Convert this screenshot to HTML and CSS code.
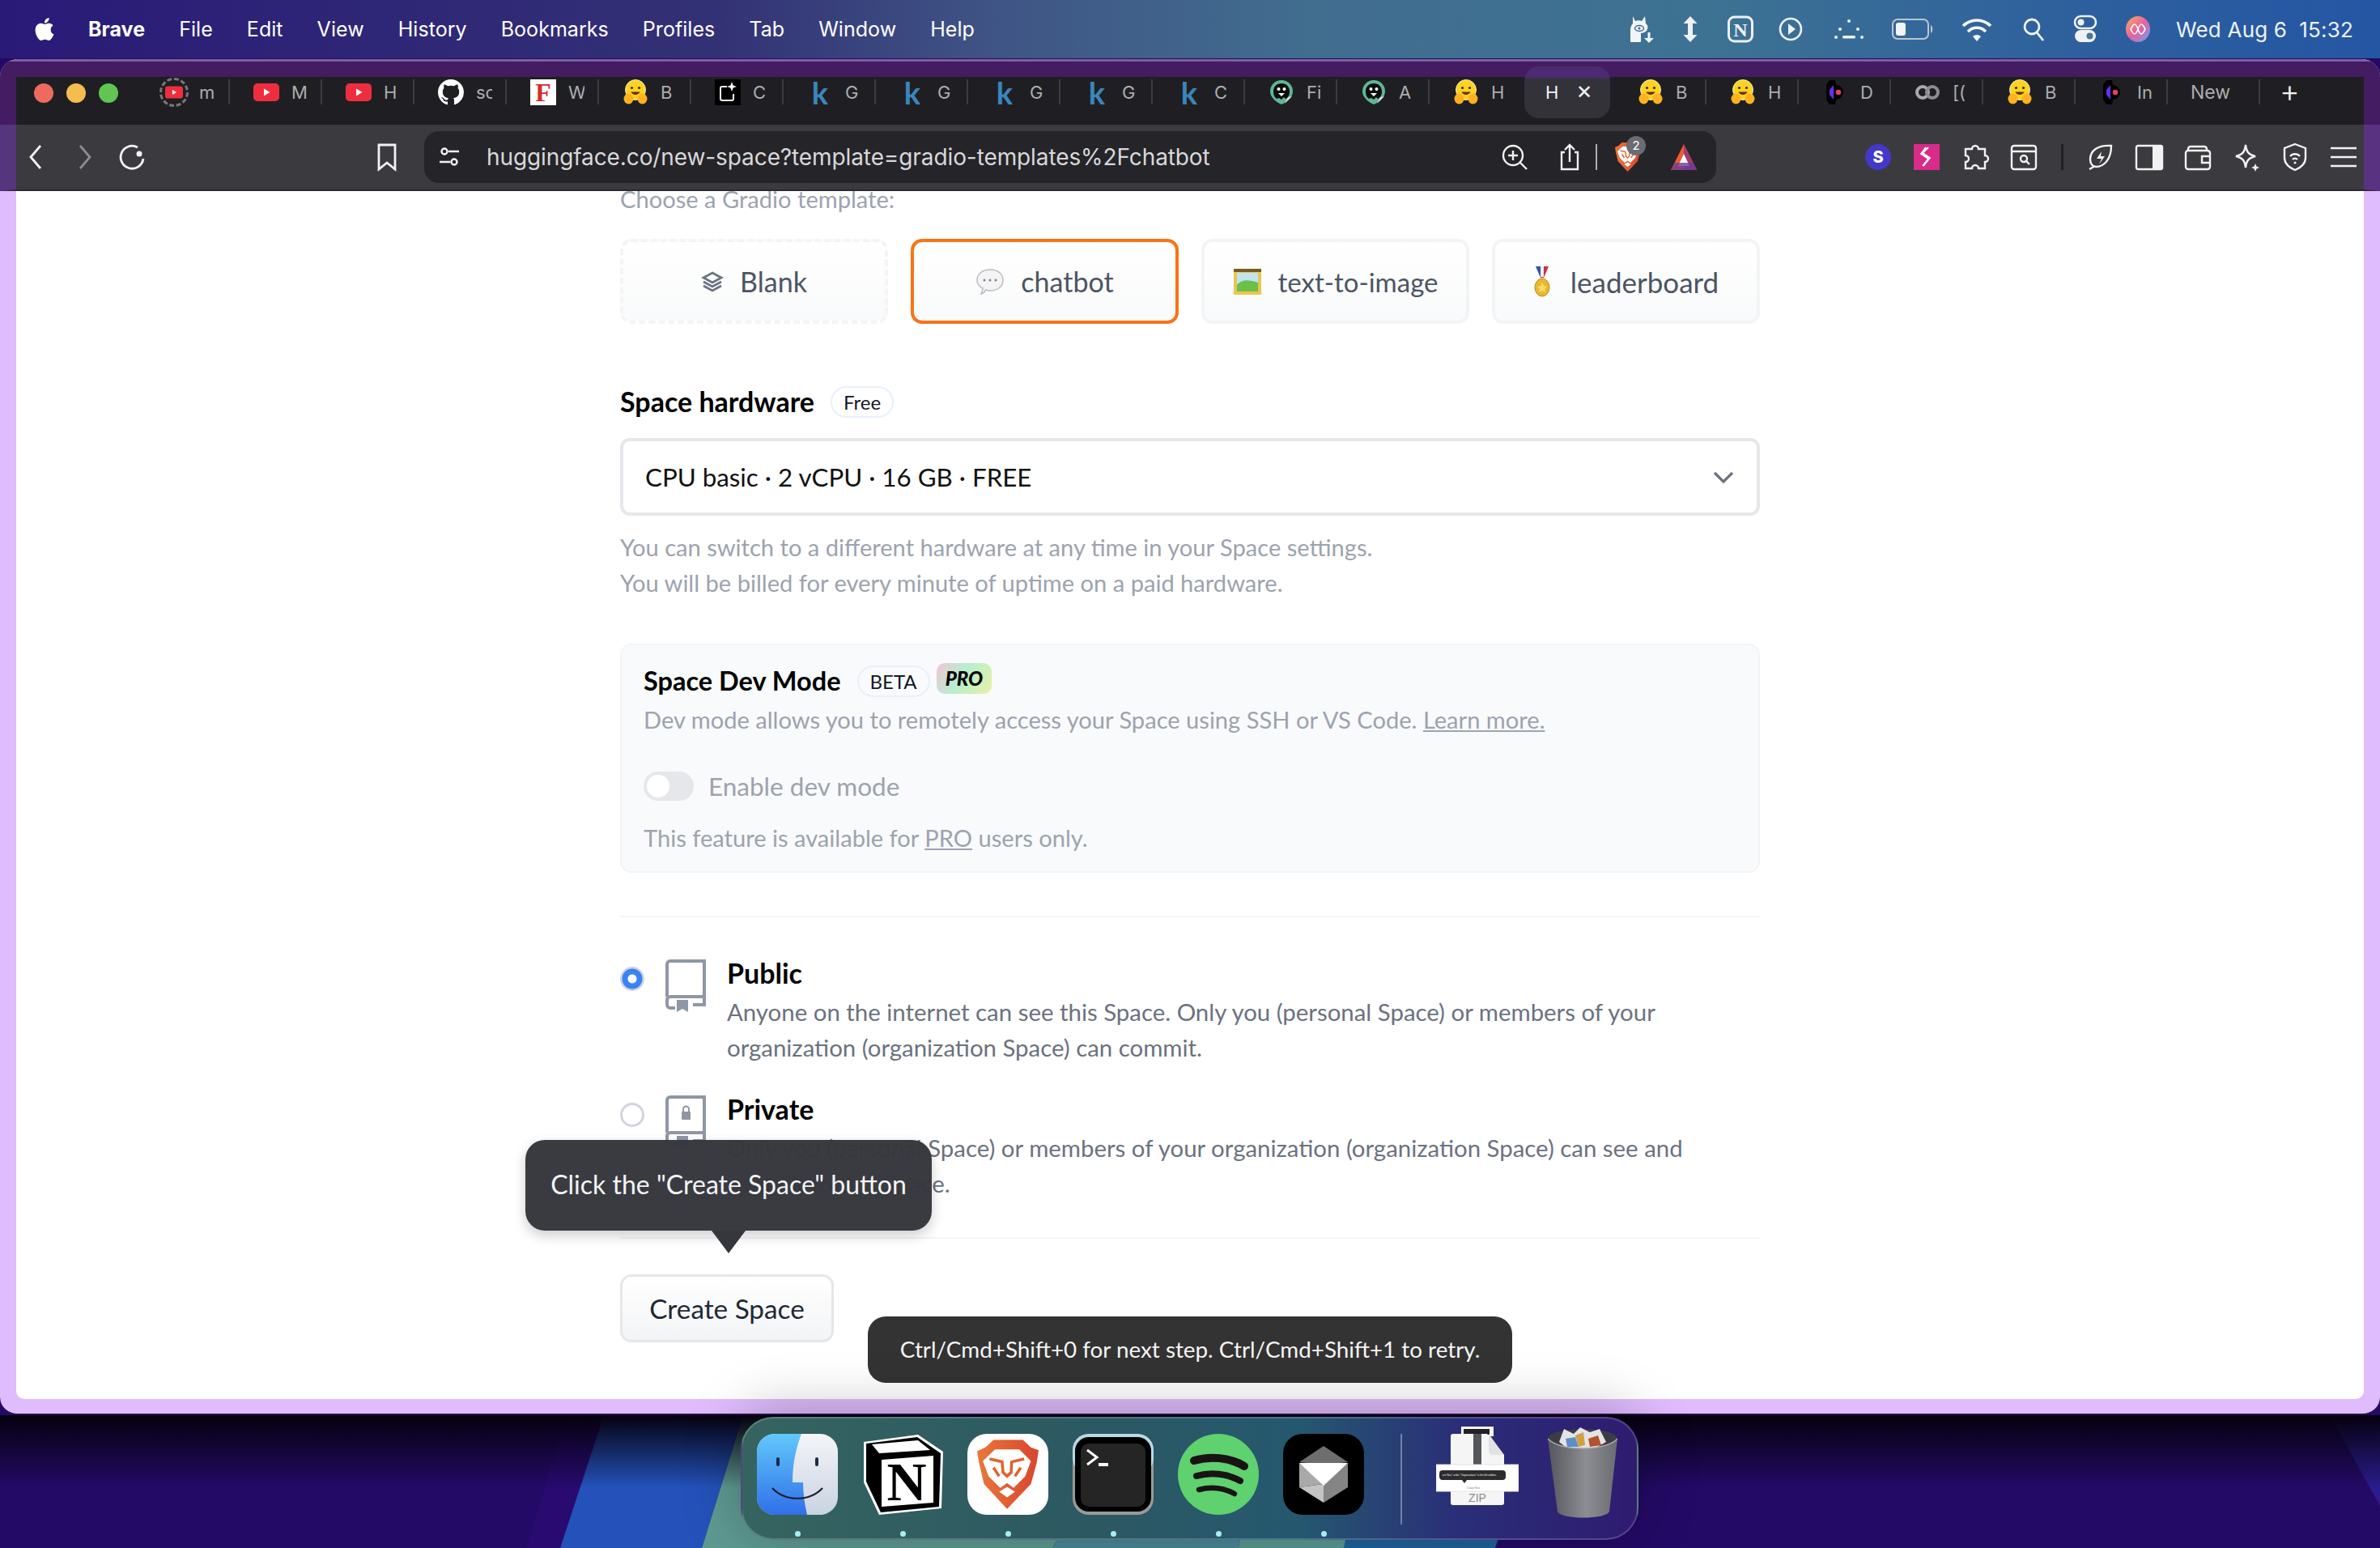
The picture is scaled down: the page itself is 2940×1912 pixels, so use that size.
FILE: index.html
```html
<!DOCTYPE html>
<html>
<head>
	<meta charset="UTF-8">
	<title>Create a new Space</title>
	<link rel="stylesheet" href="styles.css">
</head>
<body>

<svg class="defs" width="0" height="0">
	<defs>
		<linearGradient id="finderL" x1="0" y1="0" x2="0" y2="1"><stop offset="0" stop-color="#62c8fb"/><stop offset="1" stop-color="#2f6fe8"/></linearGradient>
		<linearGradient id="finderR" x1="0" y1="0" x2="0" y2="1"><stop offset="0" stop-color="#f4f5f7"/><stop offset="1" stop-color="#c9d3e2"/></linearGradient>
		<linearGradient id="braveG" x1="0" y1="0" x2="1" y2="0"><stop offset="0" stop-color="#e8783a"/><stop offset="1" stop-color="#d9452f"/></linearGradient>
		<linearGradient id="binG" x1="0" y1="0" x2="1" y2="0"><stop offset="0" stop-color="#55565c"/><stop offset=".55" stop-color="#8d8e93"/><stop offset="1" stop-color="#6a6b71"/></linearGradient>
		<linearGradient id="siriG" x1="0" y1="0" x2="1" y2="1"><stop offset="0" stop-color="#f5b25c"/><stop offset=".5" stop-color="#e8619c"/><stop offset="1" stop-color="#63a4f5"/></linearGradient>

		<symbol id="apple" viewBox="0 0 24 24"><path fill="#fff" d="M12.152 6.896c-.948 0-2.415-1.078-3.96-1.04-2.04.027-3.91 1.183-4.961 3.014-2.117 3.675-.546 9.103 1.519 12.09 1.013 1.454 2.208 3.09 3.792 3.039 1.52-.065 2.09-.987 3.935-.987 1.831 0 2.35.987 3.96.948 1.637-.026 2.676-1.48 3.676-2.948 1.156-1.688 1.636-3.325 1.662-3.415-.039-.013-3.182-1.221-3.22-4.857-.026-3.04 2.48-4.494 2.597-4.559-1.429-2.09-3.623-2.324-4.39-2.376-2-.156-3.675 1.09-4.61 1.09zM15.53 3.83c.843-1.012 1.4-2.427 1.245-3.83-1.207.052-2.662.805-3.532 1.818-.78.896-1.454 2.338-1.273 3.714 1.338.104 2.715-.688 3.559-1.701"/></symbol>

		<symbol id="hf" viewBox="0 0 32 32">
			<ellipse cx="16" cy="13" rx="12.5" ry="12.5" fill="#ffd21e" stroke="#fff" stroke-width=".8"/>
			<circle cx="11.5" cy="10.5" r="1.6" fill="#32343d"/><circle cx="20.5" cy="10.5" r="1.6" fill="#32343d"/>
			<path d="M10.5 15.5c1.5 4.5 9.5 4.5 11 0z" fill="#6b2d1e"/>
			<ellipse cx="7.5" cy="24" rx="6" ry="6.5" fill="#ffb21e"/><ellipse cx="24.5" cy="24" rx="6" ry="6.5" fill="#ffb21e"/>
		</symbol>
		<symbol id="yt" viewBox="0 0 32 32"><rect x="0" y="5" width="32" height="22" rx="5" fill="#ee2e3f"/><path d="M13 11.5l7.5 4.5-7.5 4.5z" fill="#fff"/></symbol>
		<symbol id="gh" viewBox="0 0 16 16"><path fill="#fff" d="M8 0C3.58 0 0 3.58 0 8c0 3.54 2.29 6.53 5.47 7.59.4.07.55-.17.55-.38 0-.19-.01-.82-.01-1.49-2.01.37-2.53-.49-2.69-.94-.09-.23-.48-.94-.82-1.13-.28-.15-.68-.52-.01-.53.63-.01 1.08.58 1.23.82.72 1.21 1.87.87 2.33.66.07-.52.28-.87.51-1.07-1.78-.2-3.64-.89-3.64-3.95 0-.87.31-1.59.82-2.15-.08-.2-.36-1.02.08-2.12 0 0 .67-.21 2.2.82.64-.18 1.32-.27 2-.27.68 0 1.36.09 2 .27 1.53-1.04 2.2-.82 2.2-.82.44 1.1.16 1.92.08 2.12.51.56.82 1.27.82 2.15 0 3.07-1.87 3.75-3.65 3.95.29.25.54.73.54 1.48 0 1.07-.01 1.93-.01 2.2 0 .21.15.46.55.38A8.013 8.013 0 0016 8c0-4.42-3.58-8-8-8z"/></symbol>
		<symbol id="spark" viewBox="0 0 32 32"><rect width="32" height="32" fill="#000"/><path d="M15 9H9a2 2 0 0 0-2 2v13a2 2 0 0 0 2 2h12a2 2 0 0 0 2-2v-6" fill="none" stroke="#eee" stroke-width="2"/><path d="M21 3l1.6 4.4L27 9l-4.4 1.6L21 15l-1.6-4.4L15 9l4.4-1.6z" fill="#fff"/></symbol>
		<symbol id="pin" viewBox="0 0 32 32"><path d="M16 1a14 14 0 0 1 14 14c0 7-7 13-14 16C9 28 2 22 2 15A14 14 0 0 1 16 1z" fill="#5db795"/><path d="M16 5c6 0 10 4 10 10 0 5-2 8-5 9l-2-2-3 3-3-2-3 1c-3-2-4-5-4-9C6 9 10 5 16 5z" fill="#0d0d0d"/><circle cx="12.500" cy="12" r="2" fill="#fff"/><circle cx="19.500" cy="12" r="2" fill="#fff"/><path d="M12 17h8l-4 4z" fill="#fff"/><path d="M20 30l9-9-5 1z" fill="#ddd"/></symbol>
		<symbol id="purple" viewBox="0 0 32 32"><path d="M9 1h7l1 6a9 9 0 0 1 0 18l-1 6H9L5 25V7z" fill="#000"/><path d="M14 7L9 13v6l5 6z" fill="#6a2cf5"/><circle cx="20" cy="16" r="3.2" fill="#ee3e62"/></symbol>
		<symbol id="colab" viewBox="0 0 32 32"><circle cx="10" cy="16" r="7" fill="none" stroke="#a9a9ab" stroke-width="4"/><circle cx="22" cy="16" r="7" fill="none" stroke="#8c8c8e" stroke-width="4"/></symbol>
		<symbol id="lion" viewBox="0 0 32 36">
			<path d="M8.600 0h15.100L28 4l4 1.500L31 12l-3 11-12.400 13L3.600 23 1 12 0 6l4.300-2z" fill="url(#braveG)"/>
			<path d="M9.300 5h12.700L28 11l-3 8-6 6-3.400-2.500L12 25l-6-6-3-8z" fill="#fff"/>
			<path d="M6.500 10l6.500 1.500.5 5.500 2.100 2 2.100-2 .3-5.500 6.500-1.500M8.500 14.500l3 4.500M22.700 14.500l-3 4.500" fill="none" stroke="#e2622f" stroke-width="1.500"/>
			<path d="M11.500 27l4.100-2.500 4.100 2.500-4.100 3z" fill="#fff"/>
		</symbol>

		<symbol id="bookIcon" viewBox="0 0 50 66"><path d="M2 46V6a4 4 0 0 1 4-4h42v44H6a4 4 0 0 0-4 4v6a4 4 0 0 0 4 4h6M34 56h14V46" fill="none" stroke="#8f97a6" stroke-width="4"/><path d="M14 50h14v15l-7-4-7 4z" fill="#8f97a6"/></symbol>
	</defs>
</svg>

<svg class="wallpaper" viewBox="0 0 2940 164">
	<defs>
		<linearGradient id="fadeTop" x1="0" y1="0" x2="0" y2="1"><stop offset="0" stop-color="#05010f"/><stop offset=".55" stop-color="#05010f" stop-opacity="0"/></linearGradient>
	</defs>
	<rect width="2940" height="164" fill="#230a66"/>
	<polygon points="700,0 746,0 692,164 650,164" fill="#280a70"/>
	<polygon points="746,0 918,0 867,164 692,164" fill="#2452ba"/>
	<polygon points="918,0 1400,0 1300,164 867,164" fill="#5e9a92"/>
	<polygon points="1400,0 1560,0 1530,164 1300,164" fill="#4a8797"/>
	<polygon points="1560,0 1700,0 1660,164 1530,164" fill="#5a9a94"/>
	<polygon points="1700,0 1900,0 1847,164 1660,164" fill="#21629a"/>
	<polygon points="2878,0 2940,0 2940,112" fill="#2a1c8c"/>
	<rect width="2940" height="164" fill="url(#fadeTop)"/>
</svg>

<div class="menubar">
	<div class="menu-left">
		<svg class="apple"><use href="#apple"/></svg>
		<span class="menu-item app-name">Brave</span>
		<span class="menu-item">File</span>
		<span class="menu-item">Edit</span>
		<span class="menu-item">View</span>
		<span class="menu-item">History</span>
		<span class="menu-item">Bookmarks</span>
		<span class="menu-item">Profiles</span>
		<span class="menu-item">Tab</span>
		<span class="menu-item">Window</span>
		<span class="menu-item">Help</span>
	</div>
	<div class="menu-right">
		<svg class="st" viewBox="0 0 40 40"><path d="M11 4l3 6c2-1 6-1 8 0l4-6 1 9c3 2 3 6 1 9-2 2-5 3-7 3v11H8V22c0-4 1-7 3-9z" fill="#f2f4f7"/><ellipse cx="19" cy="19" rx="5.500" ry="3.500" fill="none" stroke="#3e6a91" stroke-width="1.500"/><circle cx="19" cy="19" r="1.500" fill="#3e6a91"/><path d="M31 24v8" stroke="#f2f4f7" stroke-width="3"/><path d="M25 31h12l-6 6z" fill="#f2f4f7"/></svg>
		<svg class="st" viewBox="0 0 40 40"><path d="M20 4l8.500 9H23v14h5.500L20 36l-8.500-9H17V13h-5.500z" fill="#eef1f5"/></svg>
		<svg class="st" viewBox="0 0 40 40"><rect x="5.500" y="5" width="29" height="30" rx="7" fill="none" stroke="#eef1f5" stroke-width="3"/><text x="20" y="28.500" class="notion-mini">N</text></svg>
		<svg class="st" viewBox="0 0 40 40"><circle cx="20" cy="20" r="13" fill="none" stroke="#eef1f5" stroke-width="2.6"/><path d="M17 13l9 7-9 7z" fill="#eef1f5"/></svg>
		<svg class="st st-dots" viewBox="0 0 60 40"><g fill="#eef1f5"><circle cx="30" cy="10" r="2"/><circle cx="19" cy="20" r="2"/><circle cx="41" cy="20" r="2"/><circle cx="14" cy="30" r="2"/><circle cx="46" cy="30" r="2"/><rect x="22" y="28" width="16" height="3.6" rx="1.5"/></g></svg>
		<svg class="st st-battery" viewBox="0 0 54 40"><rect x="2" y="8" width="44" height="24" rx="6" fill="none" stroke="#b9c6d4" stroke-width="2"/><rect x="6" y="12" width="12" height="16" rx="3" fill="#f2f4f7"/><path d="M49 15c3 1 3 9 0 10z" fill="#b9c6d4"/></svg>
		<svg class="st st-wifi" viewBox="0 0 60 40"><g fill="none" stroke="#f5f7fa" stroke-width="3.6"><path d="M13 16a24 24 0 0 1 34 0"/><path d="M19 23a15 15 0 0 1 22 0"/></g><path d="M25 29a7 7 0 0 1 10 0l-5 6z" fill="#f5f7fa"/></svg>
		<svg class="st st-search" viewBox="0 0 36 40"><circle cx="16" cy="17" r="9" fill="none" stroke="#eef1f5" stroke-width="2.8"/><path d="M22 24l8 10" stroke="#eef1f5" stroke-width="2.8"/></svg>
		<svg class="st st-toggles" viewBox="0 0 48 40"><rect x="11" y="4" width="26" height="15" rx="7.5" fill="none" stroke="#eef1f5" stroke-width="2.6"/><circle cx="18.500" cy="11.500" r="4" fill="#eef1f5"/><rect x="11" y="21" width="26" height="15" rx="7.500" fill="#eef1f5"/><circle cx="29.500" cy="28.500" r="4" fill="#4a7699"/></svg>
		<svg class="st st-siri" viewBox="0 0 38 40"><ellipse cx="19" cy="20" rx="15" ry="16" fill="url(#siriG)"/><path d="M10 20c4-8 6-8 9 0s5 8 9 0c-4-8-6-8-9 0s-5 8-9 0z" fill="none" stroke="#fff" stroke-width="1.600"/></svg>
		<span class="clock">Wed Aug 6&nbsp; 15:32</span>
	</div>
</div>

<div class="window">
	<div class="tabstrip">
		<div class="traffic">
			<span class="light red"></span>
			<span class="light yellow"></span>
			<span class="light green"></span>
		</div>
		<div class="tab"><span class="loading"><svg class="favicon small"><use href="#yt"/></svg></span><span class="tab-title">m</span></div>
		<div class="tab"><svg class="favicon"><use href="#yt"/></svg><span class="tab-title">M</span></div>
		<div class="tab"><svg class="favicon"><use href="#yt"/></svg><span class="tab-title">H</span></div>
		<div class="tab"><svg class="favicon"><use href="#gh"/></svg><span class="tab-title">sc</span></div>
		<div class="tab"><span class="favicon fav-f">F</span><span class="tab-title">W</span></div>
		<div class="tab"><svg class="favicon"><use href="#hf"/></svg><span class="tab-title">B</span></div>
		<div class="tab"><svg class="favicon"><use href="#spark"/></svg><span class="tab-title">C</span></div>
		<div class="tab"><span class="favicon fav-k">k</span><span class="tab-title">G</span></div>
		<div class="tab"><span class="favicon fav-k">k</span><span class="tab-title">G</span></div>
		<div class="tab"><span class="favicon fav-k">k</span><span class="tab-title">G</span></div>
		<div class="tab"><span class="favicon fav-k">k</span><span class="tab-title">G</span></div>
		<div class="tab"><span class="favicon fav-k">k</span><span class="tab-title">C</span></div>
		<div class="tab"><svg class="favicon"><use href="#pin"/></svg><span class="tab-title">Fi</span></div>
		<div class="tab"><svg class="favicon"><use href="#pin"/></svg><span class="tab-title">A</span></div>
		<div class="tab no-sep"><svg class="favicon"><use href="#hf"/></svg><span class="tab-title">H</span></div>
		<div class="tab tab-active"><span class="active-title">H</span><span class="tab-close">✕</span></div>
		<div class="tab"><svg class="favicon"><use href="#hf"/></svg><span class="tab-title">B</span></div>
		<div class="tab"><svg class="favicon"><use href="#hf"/></svg><span class="tab-title">H</span></div>
		<div class="tab"><svg class="favicon"><use href="#purple"/></svg><span class="tab-title">D</span></div>
		<div class="tab"><svg class="favicon"><use href="#colab"/></svg><span class="tab-title">[(</span></div>
		<div class="tab"><svg class="favicon"><use href="#hf"/></svg><span class="tab-title">B</span></div>
		<div class="tab"><svg class="favicon"><use href="#purple"/></svg><span class="tab-title">In</span></div>
		<div class="tab tab-new"><span class="tab-title">New</span></div>
		<span class="new-tab">+</span>
	</div>

	<div class="toolbar">
		<div class="nav">
			<svg class="tool" viewBox="0 0 36 36"><path d="M23 4L11 18l12 14" class="line"/></svg>
			<svg class="tool" viewBox="0 0 36 36"><path d="M13 4l12 14-12 14" class="line dim"/></svg>
			<svg class="tool" viewBox="0 0 36 36"><path d="M24 6a14 14 0 1 0 7 14" class="line"/><circle cx="26" cy="14" r="3.500" fill="#f2f2f3"/></svg>
		</div>
		<svg class="tool bookmark" viewBox="0 0 36 36"><path d="M8 3h20v30l-10-8-10 8z" class="line"/></svg>
		<div class="address">
			<svg class="tool site" viewBox="0 0 28 28"><circle cx="8" cy="7" r="3.500" class="thin"/><path d="M13 7h13M2 20h13" class="thin"/><circle cx="20" cy="20" r="3.500" class="thin"/></svg>
			<span class="url">huggingface.co/new-space?template=gradio-templates%2Fchatbot</span>
			<svg class="tool" viewBox="0 0 36 36"><circle cx="16" cy="16" r="12" class="thin"/><path d="M16 10v12M10 16h12M25 25l8 8" class="thin"/></svg>
			<svg class="tool share" viewBox="0 0 36 36"><path d="M12 12H8v21h20V12h-4M18 24V3M12 9l6-6 6 6" class="thin"/></svg>
			<span class="url-div"></span>
			<span class="brave-wrap">
				<svg class="brave-ico"><use href="#lion"/></svg>
				<span class="brave-badge">2</span>
			</span>
			<svg class="tool triangle" viewBox="0 0 36 36"><path d="M18 2l16 32H2z" fill="#ef5a2e"/><path d="M18 2l16 32H18z" fill="#a23a72"/><path d="M18 14l7 15H11z" fill="#fff"/><path d="M2 34l5-9h22l5 9z" fill="#6b3a9a" opacity=".8"/></svg>
		</div>
		<div class="extensions">
			<span class="ext-s">S</span>
			<svg class="tool" viewBox="0 0 36 36"><rect x="2" y="2" width="32" height="32" fill="#d92b8a"/><path d="M20 6l-7 7 9 6-8 10M17 6l-6 8 9 6-7 9" fill="none" stroke="#fff" stroke-width="1.8"/></svg>
			<svg class="tool" viewBox="0 0 36 36"><path d="M14 8a4 4 0 1 1 8 0h8v8a4 4 0 1 1 0 8v8H22a4 4 0 1 0-8 0H6v-8a4 4 0 1 0 0-8V8z" class="thin"/></svg>
			<svg class="tool" viewBox="0 0 36 36"><rect x="3" y="4" width="30" height="29" rx="3" class="thin"/><path d="M3 11h30" class="thin"/><circle cx="18" cy="20" r="4" class="thin"/><path d="M21 23l4 4" class="thin"/></svg>
			<span class="ext-div"></span>
			<svg class="tool" viewBox="0 0 36 36"><path d="M31 4C14 3 5 10 5 21c0 5 3 9 7 9 10 0 19-9 19-26zM4 33l7-4" class="thin"/><path d="M19 11l-6 9h6l-3 7 7-10h-5z" fill="#f2f2f3"/></svg>
			<svg class="tool" viewBox="0 0 36 36"><rect x="2" y="4" width="32" height="29" rx="2" class="thin"/><rect x="22" y="4" width="12" height="29" fill="#f2f2f3"/></svg>
			<svg class="tool" viewBox="0 0 36 36"><path d="M6 10V8a3 3 0 0 1 3-3h17a3 3 0 0 1 3 3v2" class="thin"/><rect x="3" y="10" width="30" height="23" rx="3" class="thin"/><path d="M33 17H23v8h10" class="thin"/></svg>
			<svg class="tool" viewBox="0 0 36 36"><path d="M17 3c1 9 4 12 12 14-8 2-11 5-12 14-1-9-4-12-12-14 8-2 11-5 12-14z" class="thin"/><path d="M29 26l1.500 3.500L34 31l-3.500 1.500L29 36l-1.500-3.500L24 31l3.500-1.500z" fill="#f2f2f3"/></svg>
			<svg class="tool" viewBox="0 0 36 36"><path d="M18 2l13 5v12c0 8-6 12-13 15C11 31 5 27 5 19V7z" class="thin"/><path d="M12 17a8 8 0 0 1 12 0M15 21a4 4 0 0 1 6 0" class="thin"/><circle cx="18" cy="25" r="1.500" fill="#f2f2f3"/></svg>
			<svg class="tool" viewBox="0 0 36 36"><path d="M2 7h32M2 18h32M2 29h32" class="thin"/></svg>
		</div>
	</div>

	<div class="page">
		<div class="content">
			<p class="choose">Choose a Gradio template:</p>
			<div class="templates">
				<div class="tpl tpl-blank">
					<svg class="tpl-icon blank-ico" viewBox="0 0 28 28"><path d="M14 3l11 6-11 6L3 9z M3 14l11 6 11-6 M3 19l11 6 11-6" fill="none" stroke="#6b7280" stroke-width="2.800"/></svg>
					Blank
				</div>
				<div class="tpl tpl-selected">
					<svg class="tpl-icon bubble" viewBox="0 0 36 36"><path d="M18 3c9 0 16 5 16 13s-7 13-16 13c-2 0-3 0-5-1-2 3-4 5-6 5 1-2 2-4 2-7-4-2-7-6-7-10C2 8 9 3 18 3z" fill="#f4f4f5" stroke="#b8bcc2" stroke-width="1.500"/><g fill="#7b8088"><circle cx="11" cy="16" r="1.500"/><circle cx="18" cy="16" r="1.500"/><circle cx="25" cy="16" r="1.500"/></g></svg>
					chatbot
				</div>
				<div class="tpl tpl-image">
					<svg class="tpl-icon frame" viewBox="0 0 36 36"><rect x="1" y="2" width="34" height="32" fill="#e9c74f"/><rect x="1" y="2" width="34" height="4" fill="#7a5a22"/><rect x="5" y="7" width="26" height="23" fill="#bfe4f2"/><path d="M5 22c7-8 15-6 26-3v11H5z" fill="#6cc04a"/></svg>
					text-to-image
				</div>
				<div class="tpl tpl-board">
					<svg class="tpl-icon medal" viewBox="0 0 22 38"><path d="M3 0h6l3 14H9z" fill="#2f54b8"/><path d="M19 0h-6l-3 14h3z" fill="#c9323a"/><path d="M9 0h4v13H9z" fill="#eee"/><ellipse cx="11" cy="26" rx="9" ry="11" fill="#e8b92e" stroke="#b98a1c"/><path d="M11 20l2 4 4 1-3 3 1 4-4-2-4 2 1-4-3-3 4-1z" fill="#f6d96b"/></svg>
					leaderboard
				</div>
			</div>

			<div class="label-row">
				<span class="label label-hw">Space hardware</span>
				<span class="pill">Free</span>
			</div>
			<div class="select">
				<span>CPU basic · 2 vCPU · 16 GB · FREE</span>
				<svg class="chevron" viewBox="0 0 28 28"><path d="M3 9l11 11L25 9" fill="none" stroke="#6b7280" stroke-width="3.200"/></svg>
			</div>
			<p class="help">You can switch to a different hardware at any time in your Space settings.<br>You will be billed for every minute of uptime on a paid hardware.</p>

			<div class="devmode">
				<div class="label-row dev-title">
					<span class="label">Space Dev Mode</span>
					<span class="pill">BETA</span>
					<span class="pro">PRO</span>
				</div>
				<p class="dev-text">Dev mode allows you to remotely access your Space using SSH or VS Code. <span class="link">Learn more.</span></p>
				<div class="dev-toggle">
					<span class="switch"><span class="knob"></span></span>
					<span>Enable dev mode</span>
				</div>
				<p class="dev-note">This feature is available for <span class="link">PRO</span> users only.</p>
			</div>

			<div class="rule rule-top"></div>

			<div class="visibility">
				<span class="radio radio-on"></span>
				<svg class="book" viewBox="0 0 50 66"><use href="#bookIcon"/></svg>
				<div>
					<div class="vis-title">Public</div>
					<p class="vis-text">Anyone on the internet can see this Space. Only you (personal Space) or members of your<br>organization (organization Space) can commit.</p>
				</div>
			</div>
			<div class="visibility private">
				<span class="radio"></span>
				<svg class="book" viewBox="0 0 50 66"><use href="#bookIcon"/><rect x="20" y="20" width="11" height="10" rx="1" fill="#8f97a6"/><path d="M22 20v-3a3.500 3.500 0 0 1 7 0v3" fill="none" stroke="#8f97a6" stroke-width="2"/></svg>
				<div>
					<div class="vis-title">Private</div>
					<p class="vis-text">Only you (personal Space) or members of your organization (organization Space) can see and<br>commit to this Space.</p>
				</div>
			</div>

			<div class="rule rule-bottom"></div>
			<button class="create" type="button">Create Space</button>
		</div>

		<div class="tooltip">Click the "Create Space" button</div>
		<div class="toast">Ctrl/Cmd+Shift+0 for next step. Ctrl/Cmd+Shift+1 to retry.</div>
	</div>
</div>

<div class="dock">
	<div class="dock-item">
		<svg class="dock-ico" viewBox="0 0 100 100"><rect width="100" height="100" rx="22" fill="url(#finderR)"/><path d="M22 0h33c-7 18-11 38-11 60h13c0 14 2 27 5 40H22A22 22 0 0 1 0 78V22A22 22 0 0 1 22 0z" fill="url(#finderL)"/><rect x="24" y="29" width="4" height="11" rx="2" fill="#1c2a44"/><rect x="72" y="29" width="4" height="11" rx="2" fill="#1c2a44"/><path d="M19 67c16 17 46 17 62 0" fill="none" stroke="#1c2030" stroke-width="2.200"/></svg>
		<span class="dot"></span>
	</div>
	<div class="dock-item">
		<svg class="dock-ico" viewBox="0 0 100 100"><path d="M2 10L69 1l31 21-2 70-77 8L2 60z" fill="#fff"/><path d="M5 12L68 4l29 20-2 66-72 7L5 59z" fill="#000"/><path d="M12 13l57-5 15 12-63 4z" fill="#fff"/><path d="M24 32l64-5v58l-64 5z" fill="#fff"/><text x="55" y="82" class="notion-big">N</text></svg>
		<span class="dot"></span>
	</div>
	<div class="dock-item">
		<svg class="dock-ico" viewBox="0 0 100 100"><rect width="100" height="100" rx="24" fill="#fff"/><svg x="12" y="6" width="76" height="88" viewBox="0 0 32 36"><use href="#lion"/></svg></svg>
		<span class="dot"></span>
	</div>
	<div class="dock-item">
		<svg class="dock-ico" viewBox="0 0 100 100"><rect width="100" height="100" rx="20" fill="#9a9a9a"/><rect y="0" width="100" height="50" rx="20" fill="#b8d8e4"/><rect x="3" y="4" width="94" height="92" rx="17" fill="#000"/><rect x="10" y="12" width="80" height="78" rx="10" fill="#252525"/><path d="M18 20l12 9-12 9" fill="none" stroke="#fff" stroke-width="3"/><rect x="32" y="36" width="12" height="4" fill="#fff"/></svg>
		<span class="dot"></span>
	</div>
	<div class="dock-item">
		<svg class="dock-ico" viewBox="0 0 100 100"><circle cx="50" cy="50" r="50" fill="#5fd16f"/><g fill="none" stroke="#191414" stroke-linecap="round"><path d="M20 33c20-6 44-4 62 7" stroke-width="10"/><path d="M23 52c18-5 38-3 54 6" stroke-width="8"/><path d="M26 69c15-4 31-2 44 5" stroke-width="6.500"/></g></svg>
		<span class="dot"></span>
	</div>
	<div class="dock-item">
		<svg class="dock-ico" viewBox="0 0 100 100"><rect width="100" height="100" rx="24" fill="#000"/><polygon points="50,15 80,35 50,38 20,35" fill="#6e6e6e"/><polygon points="20,36 50,62 20,66" fill="#a9a9a9"/><polygon points="20,66 50,62 50,85" fill="#c4c4c4"/><polygon points="80,36 80,66 50,85 50,62" fill="#858585"/><polygon points="20,36 80,36 50,64" fill="#fff"/></svg>
		<span class="dot"></span>
	</div>
	<span class="dock-sep"></span>
	<div class="dock-item">
		<svg class="zip-ico" viewBox="0 0 102 98">
			<rect x="31" y="0" width="40" height="12" fill="#f5f5f5"/>
			<rect x="34" y="3" width="32" height="7" fill="#222"/>
			<path d="M18 12a3 3 0 0 1 3-3h42l21 26v59a3 3 0 0 1-3 3H21a3 3 0 0 1-3-3z" fill="#f5f5f5"/>
			<path d="M65 9l19 26H70a5 5 0 0 1-5-5z" fill="#e2e2e2"/>
			<rect x="46" y="9" width="10" height="38" fill="#55565a"/>
			<rect x="0" y="47" width="102" height="33" fill="#fff" stroke="#e4e4e4"/>
			<rect x="4" y="54" width="82" height="12" rx="4" fill="#2c2c2e"/>
			<path d="M32 66h6l-3 4z" fill="#2c2c2e"/>
			<text x="8" y="61" class="zip-tiny">are New" under "Organizations" in the left sidebar.</text>
			<text x="38" y="77" class="zip-tiny dark">Create New</text>
			<text x="51" y="93" class="zip-label">ZIP</text>
		</svg>
	</div>
	<div class="dock-item">
		<svg class="trash-ico" viewBox="0 0 86 112">
			<ellipse cx="43" cy="14" rx="43" ry="12" fill="#3c3d44"/>
			<path d="M14 18L20 2l12 6L40 0l12 6 12-4 8 16-14 8H24z" fill="#e4e4e6"/>
			<path d="M22 14l12-2 4 12-14 0z" fill="#5b8fc9"/>
			<path d="M34 10l10-4 2 16-8 2z" fill="#d0a042"/>
			<path d="M50 14l12-4 4 12-14 2z" fill="#b5512e"/>
			<path d="M0 14c14 16 72 16 86 0l-10 90c-4 10-60 10-64 0z" fill="url(#binG)"/>
			<path d="M0 14c14 16 72 16 86 0" fill="none" stroke="#a9aaae" stroke-width="1.500"/>
		</svg>
	</div>
</div>

</body>
</html>
```

FILE: styles.css
```css
html, body {
	margin: 0;
	padding: 0;
}

body {
	position: relative;
	width: 2940px;
	height: 1912px;
	overflow: hidden;
	background-color: #230a66;
	font-family: "Lato", "Noto Sans", sans-serif;
}

p {
	margin: 0;
}

.defs {
	position: absolute;
}

.wallpaper {
	position: absolute;
	left: 0;
	top: 1748px;
	width: 2940px;
	height: 164px;
}

/* top menu */

.menubar {
	position: relative;
	height: 72px;
	display: flex;
	align-items: center;
	justify-content: space-between;
	padding: 0 34px 0 41px;
	background: linear-gradient(90deg, #291a78 0%, #333175 30%, #3f5585 42%, #416d8f 55%, #3d7293 72%, #2d5f9e 88%, #2456a4 100%);
	font-family: "Inter", "Liberation Sans", sans-serif;
	font-size: 25px;
	color: #fff;
}

.menu-left {
	display: flex;
	align-items: center;
	gap: 42px;
}

.menu-item {
	letter-spacing: 0.05px;
}

.apple {
	width: 28px;
	height: 32px;
	margin-right: -2px;
}

.app-name {
	font-weight: 700;
}

.menu-right {
	display: flex;
	align-items: center;
	gap: 22px;
}

.st {
	width: 40px;
	height: 40px;
}

.st-dots { width: 60px; }
.st-battery { width: 54px; }
.st-wifi { width: 60px; }
.st-search { width: 36px; }
.st-toggles { width: 48px; }
.st-siri { width: 38px; }

.notion-mini {
	font-family: "Liberation Serif", serif;
	font-weight: 700;
	font-size: 24px;
	text-anchor: middle;
	fill: #eef1f5;
}

.clock {
	width: 218px;
	margin-left: 6px;
	white-space: nowrap;
	font-size: 26px;
	letter-spacing: 0.2px;
	color: #eef1f5;
}

/* browser window */

.window {
	position: absolute;
	left: 0;
	top: 73px;
	width: 2940px;
	height: 1675px;
	box-sizing: border-box;
	display: flex;
	flex-direction: column;
	overflow: hidden;
	border-radius: 22px;
	background-color: #dfbcfd;
	border-bottom: 2px solid #2a1145;
}

.tabstrip {
	flex: none;
	height: 81px;
	box-sizing: border-box;
	padding: 22px 20px 0 20px;
	background: linear-gradient(#7c5f9f 0 3px, #431c61 3px);
	display: flex;
	position: relative;
}

.traffic {
	flex: none;
	width: 150px;
	height: 59px;
	background-color: #1f1f23;
	display: flex;
	align-items: center;
	justify-content: flex-start;
	gap: 16px;
	padding-left: 22px;
	padding-bottom: 20px;
	box-sizing: border-box;
}

.light {
	width: 24px;
	height: 24px;
	border-radius: 50%;
}

.red { background-color: #ee6a5f; }
.yellow { background-color: #f5bd4f; }
.green { background-color: #61c554; }

.tab {
	flex: none;
	width: 114px;
	height: 59px;
	box-sizing: border-box;
	background-color: #1f1f23;
	position: relative;
	display: flex;
	align-items: flex-start;
	padding: 3px 0 0 29px;
	color: #adadaf;
	font-family: "Inter", "Liberation Sans", sans-serif;
	font-size: 22px;
}

.tab::after {
	content: "";
	position: absolute;
	right: 0;
	top: 3px;
	width: 2px;
	height: 31px;
	background-color: #3b3b40;
}

.no-sep::after,
.tab-active::after {
	display: none;
}

.favicon {
	width: 32px;
	height: 32px;
	flex: none;
}

.small {
	width: 22px;
	height: 22px;
}

.loading {
	width: 36px;
	height: 36px;
	margin: -2px -2px 0 -2px;
	box-sizing: border-box;
	border: 3px dashed #77777a;
	border-radius: 50%;
	display: flex;
	align-items: center;
	justify-content: center;
	flex: none;
}

.fav-f {
	background-color: #fff;
	color: #d62b2b;
	font-family: "Liberation Serif", serif;
	font-weight: 700;
	font-size: 32px;
	line-height: 32px;
	text-align: center;
}

.fav-k {
	color: #3a86bd;
	font-family: "Lato", sans-serif;
	font-weight: 700;
	font-size: 38px;
	line-height: 32px;
	text-align: center;
}

.tab-title {
	width: 20px;
	margin-left: 15px;
	line-height: 33px;
	overflow: hidden;
	white-space: nowrap;
}

.tab-active {
	background: linear-gradient(#431c61 0 13px, #1f1f23 13px);
	margin-top: -13px;
	height: 72px;
	padding: 0;
}

.active-title {
	position: absolute;
	left: 29px;
	top: 17px;
	z-index: 1;
	color: #f2f2f3;
	line-height: 30px;
}

.tab-close {
	position: absolute;
	left: 67px;
	top: 17px;
	z-index: 1;
	color: #f2f2f3;
	line-height: 30px;
	font-size: 24px;
	font-family: "DejaVu Sans", sans-serif;
}

.tab-active::before {
	content: "";
	position: absolute;
	left: 3px;
	right: 5px;
	top: 0;
	height: 64px;
	border-radius: 18px;
	background: linear-gradient(#4d2b70 0 13px, #333238 16px);
}

.tab-new {
	padding-left: 28px;
}

.tab-new .tab-title {
	width: 62px;
	margin-left: 0;
	font-size: 23px;
}

.new-tab {
	flex: 1;
	height: 59px;
	background-color: #1f1f23;
	color: #f2f2f3;
	font-family: "Inter", sans-serif;
	font-size: 38px;
	line-height: 34px;
	padding-left: 24px;
	font-weight: 300;
}

.toolbar {
	flex: none;
	height: 80px;
	margin-top: 0;
	display: flex;
	align-items: center;
	background-color: #3b3a3f;
	border-left: 20px solid #55367d;
	border-right: 20px solid #5a3282;
	border-bottom: 2px solid #2b2a2e;
	box-sizing: content-box;
}

.nav {
	display: flex;
	align-items: center;
	gap: 23px;
	margin-left: 7px;
}

.nav .tool:last-child {
	margin-left: 1px;
}

.tool {
	width: 36px;
	height: 36px;
	flex: none;
}

.line {
	fill: none;
	stroke: #f2f2f3;
	stroke-width: 2.800;
}

.dim {
	stroke: #8d8d90;
}

.thin {
	fill: none;
	stroke: #f2f2f3;
	stroke-width: 2.400;
}

.bookmark {
	margin-left: 278px;
}

.address {
	flex: none;
	width: 1596px;
	height: 64px;
	margin-left: 28px;
	box-sizing: border-box;
	padding: 0 22px 0 17px;
	border-radius: 18px;
	background-color: #252429;
	display: flex;
	align-items: center;
}

.site {
	width: 28px;
	height: 28px;
}

.url {
	flex: 1;
	margin-left: 32px;
	color: #d8d8da;
	font-family: "Inter", "Liberation Sans", sans-serif;
	font-size: 28px;
	letter-spacing: -0.1px;
	white-space: nowrap;
}

.share {
	margin-left: 32px;
}

.url-div {
	width: 2px;
	height: 32px;
	margin-left: 14px;
	background-color: #b0b0b2;
}

.brave-wrap {
	position: relative;
	width: 32px;
	height: 36px;
	margin-left: 22px;
}

.brave-ico {
	width: 32px;
	height: 36px;
}

.brave-badge {
	position: absolute;
	left: 14px;
	top: -8px;
	width: 24px;
	height: 24px;
	border-radius: 50%;
	background-color: #6a6b73;
	color: #fff;
	font-family: "Inter", sans-serif;
	font-size: 15px;
	line-height: 24px;
	text-align: center;
}

.triangle {
	margin-left: 35px;
}

.extensions {
	display: flex;
	align-items: center;
	gap: 24px;
	margin-left: 182px;
}

.ext-s {
	width: 32px;
	height: 32px;
	margin: 0 2px;
	border-radius: 50%;
	background-color: #4338ca;
	color: #fff;
	font-family: "Inter", sans-serif;
	font-weight: 800;
	font-size: 20px;
	line-height: 32px;
	text-align: center;
}

.ext-div {
	width: 3px;
	height: 32px;
	margin: 0 4px;
	background-color: #202023;
}

/* page content */

.page {
	position: relative;
	flex: 1;
	margin: 0 20px 18px 20px;
	background-color: #fff;
	border-radius: 0 0 10px 10px;
	overflow: hidden;
}

.content {
	width: 1408px;
	margin: -12px auto 0 auto;
	font-size: 29.100px;
	line-height: 44px;
	color: #6b7280;
}

.choose {
	color: #9ca3af;
}

.templates {
	display: grid;
	grid-template-columns: repeat(4, 1fr);
	gap: 28px;
	margin-top: 27px;
}

.tpl {
	height: 105px;
	box-sizing: border-box;
	display: flex;
	align-items: center;
	justify-content: center;
	gap: 20px;
	border: 4px solid #f3f4f6;
	border-radius: 14px;
	background: linear-gradient(#fff, #f9fafb);
	color: #4b5563;
	font-size: 34px;
}

.tpl-blank {
	border-style: dashed;
}

.tpl-selected {
	border-color: #f97316;
}

.tpl-image {
	font-size: 33px;
}

.tpl-board {
	font-size: 35px;
	gap: 24px;
}

.blank-ico { width: 28px; height: 28px; }
.bubble { width: 36px; height: 36px; }
.frame { width: 36px; height: 36px; }
.medal { width: 22px; height: 38px; }

.label-row {
	display: flex;
	align-items: center;
	gap: 20px;
	height: 39px;
	margin-top: 77px;
}

.label {
	margin-top: -2px;
	font-size: 32.500px;
	font-weight: 700;
	color: #000;
}

.label-hw {
	font-size: 34px;
}

.pill {
	height: 39px;
	box-sizing: border-box;
	padding: 0 14px;
	border: 2px solid #e9effb;
	border-radius: 20px;
	color: #111827;
	font-size: 24px;
	line-height: 35px;
}

.select {
	height: 96px;
	box-sizing: border-box;
	margin-top: 25px;
	padding: 0 27px 0 27px;
	display: flex;
	align-items: center;
	justify-content: space-between;
	border: 4px solid #e5e7eb;
	border-radius: 12px;
	color: #111;
	font-size: 31.300px;
}

.chevron {
	width: 28px;
	height: 28px;
}

.help {
	margin-top: 17px;
	color: #9ca3af;
}

.devmode {
	height: 283px;
	box-sizing: border-box;
	margin-top: 53px;
	padding: 25px 27px 0 27px;
	background-color: #f9fafb;
	border: 2px solid #f3f4f6;
	border-radius: 14px;
	color: #9ca3af;
}

.dev-title {
	margin-top: 0;
}

.pro {
	height: 38px;
	margin: -8px 0 0 -12px;
	padding: 0 11px;
	border-radius: 10px;
	background: linear-gradient(120deg, #f3c3d6 0%, #b5efd0 45%, #e9f0a5 100%);
	color: #000;
	font-size: 24px;
	font-weight: 900;
	font-style: italic;
	line-height: 38px;
}

.dev-text {
	margin-top: 6px;
}

.link {
	text-decoration: underline;
}

.dev-toggle {
	display: flex;
	align-items: center;
	gap: 18px;
	height: 40px;
	margin-top: 40px;
	font-size: 31.500px;
}

.switch {
	width: 62px;
	height: 36px;
	box-sizing: border-box;
	padding: 4px;
	border-radius: 18px;
	background-color: #e5e7eb;
}

.knob {
	display: block;
	width: 28px;
	height: 28px;
	border-radius: 50%;
	background-color: #fff;
}

.dev-note {
	margin-top: 22px;
}

.rule {
	height: 2px;
	background-color: #f3f4f6;
}

.rule-top {
	margin-top: 53px;
}

.rule-bottom {
	margin-top: 44px;
}

.visibility {
	display: grid;
	grid-template-columns: 30px 50px 1fr;
	column-gap: 26px;
	margin-top: 49px;
}

.private {
	margin-top: 34px;
}

.radio {
	width: 30px;
	height: 30px;
	box-sizing: border-box;
	margin-top: 12px;
	border: 3px solid #d1d5db;
	border-radius: 50%;
	background-color: #fff;
}

.radio-on {
	border: none;
	background: radial-gradient(circle, #fff 0 5px, #3b82f6 6px 12px, #cfd3da 13px);
}

.book {
	width: 50px;
	height: 66px;
	margin-top: 3px;
}

.vis-title {
	font-size: 34px;
	font-weight: 700;
	line-height: 40px;
	color: #000;
}

.vis-text {
	margin-top: 6px;
	font-size: 29.400px;
}

.create {
	display: block;
	width: 264px;
	height: 84px;
	margin-top: 44px;
	border: 3px solid #e5e7eb;
	border-radius: 14px;
	background: linear-gradient(#fff, #f3f4f6);
	color: #1f2937;
	font-family: inherit;
	font-size: 33.300px;
}

/* guide overlays */

.tooltip {
	position: absolute;
	left: 629px;
	top: 1172px;
	width: 502px;
	height: 112px;
	border-radius: 24px;
	background-color: rgba(54, 55, 60, 0.98);
	box-shadow: 0 6px 16px rgba(0, 0, 0, 0.2);
	color: #f3f4f6;
	font-size: 32px;
	line-height: 110px;
	text-align: center;
	white-space: nowrap;
}

.tooltip::after {
	content: "";
	position: absolute;
	left: 230px;
	top: 112px;
	border-left: 21px solid transparent;
	border-right: 21px solid transparent;
	border-top: 28px solid #36373c;
}

.toast {
	position: absolute;
	left: 1052px;
	bottom: 20px;
	width: 796px;
	height: 82px;
	border-radius: 22px;
	background-color: #333;
	color: #f5f5f5;
	font-size: 27.800px;
	line-height: 82px;
	text-align: center;
	white-space: nowrap;
}

/* dock */

.dock {
	position: absolute;
	left: 915px;
	top: 1750px;
	width: 1109px;
	height: 152px;
	box-sizing: border-box;
	padding: 0 3px;
	display: flex;
	border: 2px solid rgba(255, 255, 255, 0.18);
	border-radius: 40px;
	background: linear-gradient(90deg, #356460 0%, #2c5862 40%, #25586f 62%, #2a2e78 80%, #2f1b70 100%);
	box-shadow: 0 -6px 70px rgba(0, 0, 0, 0.28);
}

.dock-item {
	width: 130px;
	flex: none;
	display: flex;
	flex-direction: column;
	align-items: center;
	padding-top: 19px;
	box-sizing: border-box;
}

.dock-ico {
	width: 100px;
	height: 100px;
	flex: none;
}

.zip-ico {
	width: 102px;
	height: 98px;
	margin-top: -9px;
}

.trash-ico {
	width: 86px;
	height: 112px;
	margin-top: -8px;
}

.zip-tiny {
	font-family: "Liberation Sans", sans-serif;
	font-size: 3px;
	fill: #eee;
}

.dark {
	fill: #777;
}

.zip-label {
	font-family: "Liberation Sans", sans-serif;
	font-size: 14px;
	text-anchor: middle;
	fill: #8a8a8a;
}

.dot {
	width: 7px;
	height: 7px;
	margin-top: 20px;
	border-radius: 50%;
	background-color: #a8eef0;
}

.dock-sep {
	flex: none;
	width: 2px;
	height: 112px;
	margin: 19px 28px 0 30px;
	background-color: rgba(255, 255, 255, 0.35);
}

.notion-big {
	font-family: "Liberation Serif", serif;
	font-weight: 700;
	font-size: 68px;
	text-anchor: middle;
	fill: #000;
}
```
